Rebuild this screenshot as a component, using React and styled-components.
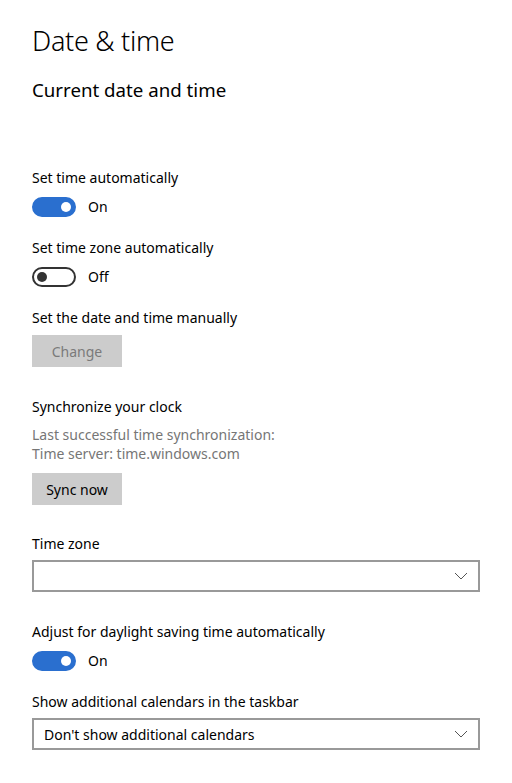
import React from "react";
import styled, { createGlobalStyle } from "styled-components";

const Global = createGlobalStyle`
  html, body { margin: 0; padding: 0; background: #fff; }
  body { font-family: "Segoe UI", "Noto Sans", "Open Sans", sans-serif; color: #000; }
`;

const Page = styled.div`
  padding: 22px 32px 0 32px;
  width: 448px;
`;

const Title = styled.h1`
  margin: 0;
  font-size: 27px;
  font-weight: 300;
  line-height: 38px;
  letter-spacing: -0.3px;
`;

const Subtitle = styled.h2`
  margin: 16px 0 0 0;
  font-size: 18.7px;
  font-weight: 400;
  line-height: 28px;
`;

const Section = styled.div`
  margin-top: ${p => p.$top}px;
`;

const Label = styled.div`
  font-size: 14px;
  line-height: ${p => p.$lh ?? 20}px;
  color: ${p => (p.$muted ? "#767676" : "#000")};
`;

const ToggleRow = styled.div`
  display: flex;
  align-items: center;
  gap: 12px;
  margin-top: 9px;
  height: 20px;
`;

const Track = styled.div`
  width: 44px;
  height: 20px;
  box-sizing: border-box;
  border-radius: 10px;
  border: 2px solid ${p => (p.$on ? "#2a6fcf" : "#333")};
  background: ${p => (p.$on ? "#2a6fcf" : "#fff")};
  display: flex;
  align-items: center;
  justify-content: ${p => (p.$on ? "flex-end" : "flex-start")};
  padding: 0 3px;
`;

const Knob = styled.div`
  width: 10px;
  height: 10px;
  border-radius: 50%;
  background: ${p => (p.$on ? "#fff" : "#333")};
`;

const ToggleText = styled.span`
  font-size: 14px;
  line-height: 20px;
`;

const Button = styled.div`
  margin-top: ${p => p.$top ?? 7}px;
  width: 90px;
  height: 32px;
  background: #cccccc;
  display: flex;
  align-items: center;
  justify-content: center;
  font-size: 14px;
  color: ${p => (p.$disabled ? "#7a7a7a" : "#000")};
`;

const Select = styled.div`
  margin-top: 6px;
  height: 32px;
  box-sizing: border-box;
  border: 2px solid #999;
  display: flex;
  align-items: center;
  justify-content: space-between;
  padding: 0 10px 0 10px;
  font-size: 14px;
`;

const Chevron = () => (
  <svg width="14" height="8" viewBox="0 0 14 8">
    <path d="M1 1 L7 7 L13 1" fill="none" stroke="#555" strokeWidth="1" />
  </svg>
);

function Toggle({ on }) {
  return (
    <ToggleRow>
      <Track $on={on}>
        <Knob $on={on} />
      </Track>
      <ToggleText>{on ? "On" : "Off"}</ToggleText>
    </ToggleRow>
  );
}

export default function App() {
  return (
    <>
      <Global />
      <Page>
        <Title>Date &amp; time</Title>
        <Subtitle>Current date and time</Subtitle>

        <Section $top={64}>
          <Label>Set time automatically</Label>
          <Toggle on />
        </Section>

        <Section $top={21}>
          <Label>Set time zone automatically</Label>
          <Toggle on={false} />
        </Section>

        <Section $top={21}>
          <Label>Set the date and time manually</Label>
          <Button $disabled>Change</Button>
        </Section>

        <Section $top={30}>
          <Label>Synchronize your clock</Label>
          <Label $muted $lh={19} style={{ marginTop: 8 }}>Last successful time synchronization:</Label>
          <Label $muted $lh={19}>Time server: time.windows.com</Label>
          <Button $top={10}>Sync now</Button>
        </Section>

        <Section $top={29}>
          <Label>Time zone</Label>
          <Select>
            <span />
            <Chevron />
          </Select>
        </Section>

        <Section $top={30}>
          <Label>Adjust for daylight saving time automatically</Label>
          <Toggle on />
        </Section>

        <Section $top={21}>
          <Label>Show additional calendars in the taskbar</Label>
          <Select>
            <span>Don't show additional calendars</span>
            <Chevron />
          </Select>
        </Section>
      </Page>
    </>
  );
}
